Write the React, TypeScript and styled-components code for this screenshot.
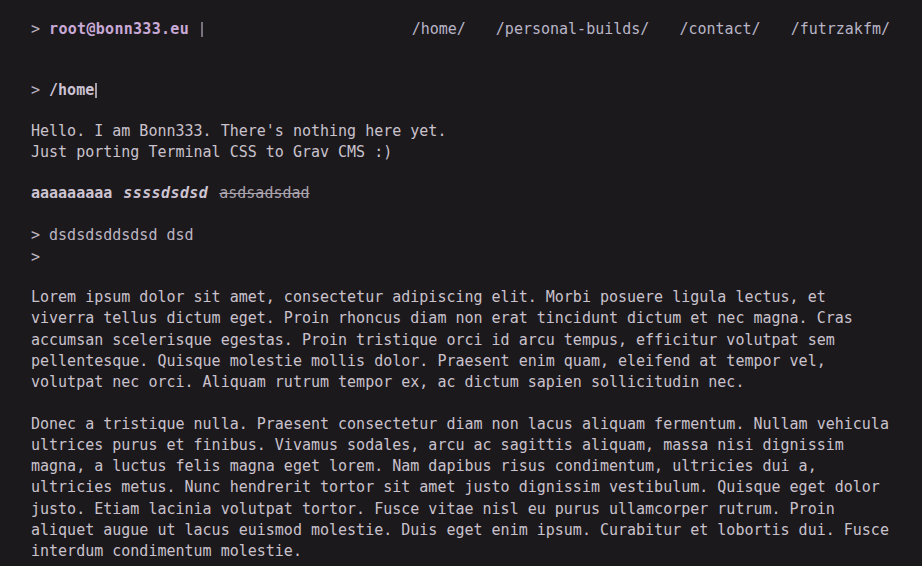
import React from "react";
import styled, { createGlobalStyle } from "styled-components";

const Global = createGlobalStyle`
  html, body { margin: 0; padding: 0; background: #1c191d; }
  body {
    font-family: "DejaVu Sans Mono", "Liberation Mono", monospace;
    font-size: 15px;
    line-height: 21.3px;
    color: #c9c2cc;
  }
`;

const Page = styled.div`
  padding: 19px 31px 0;
  min-height: 566px;
  box-sizing: border-box;
`;

const Header = styled.header`
  display: flex;
  justify-content: space-between;
  align-items: center;
  height: 21.3px;
`;

const Logo = styled.div`
  display: flex;
  align-items: center;
  font-weight: bold;
  color: #c9a9d6;
  letter-spacing: 0.3px;
`;

const Prompt = styled.span`
  color: #b9b2c0;
  font-weight: normal;
  white-space: pre;
  letter-spacing: 0;
`;

const Cursor = styled.span<{ $tone: string; $gap?: number }>`
  display: inline-block;
  width: 2px;
  height: 15px;
  background: ${(p) => p.$tone};
  margin-left: ${(p) => p.$gap ?? 0}px;
  vertical-align: -2px;
`;

const Nav = styled.nav`
  display: flex;
  gap: 30px;
  margin-right: 1px;
`;

const NavLink = styled.a`
  color: #b8b5c6;
  text-decoration: none;
`;

const Main = styled.main`
  margin-top: 40px;
`;

const Title = styled.h1`
  margin: 0 0 19px;
  font-size: 15px;
  line-height: 21.3px;
  font-weight: bold;
  color: #cbc2d2;
  display: flex;
  align-items: center;
`;

const Para = styled.p`
  margin: 0 0 20px;
`;

const Strong = styled.strong`
  font-weight: bold;
  color: #cdc4d2;
`;

const Em = styled.em`
  font-style: italic;
  font-weight: bold;
  color: #cdc4d2;
  letter-spacing: 0.4px;
  margin-left: 2px;
`;

const Del = styled.del`
  color: #aaa3ae;
  margin-left: 2px;
`;

const Quote = styled.blockquote`
  margin: 21px 0 19px;
  display: flex;
  color: #bdb6c2;
`;

const Gutter = styled.span`
  white-space: pre;
  width: 2ch;
  flex: none;
`;

export default function App() {
  return (
    <>
      <Global />
      <Page>
        <Header>
          <Logo>
            <Prompt>{"> "}</Prompt>
            root@bonn333.eu
            <Cursor $tone="#7a717e" $gap={12} />
          </Logo>
          <Nav>
            <NavLink href="#">/home/</NavLink>
            <NavLink href="#">/personal-builds/</NavLink>
            <NavLink href="#">/contact/</NavLink>
            <NavLink href="#">/futrzakfm/</NavLink>
          </Nav>
        </Header>
        <Main>
          <Title>
            <Prompt>{"> "}</Prompt>
            /home
            <Cursor $tone="#a59fab" $gap={1} />
          </Title>
          <Para>
            Hello. I am Bonn333. There's nothing here yet.
            <br />
            Just porting Terminal CSS to Grav CMS :)
          </Para>
          <Para>
            <Strong>aaaaaaaaa</Strong> <Em>ssssdsdsd</Em> <Del>asdsadsdad</Del>
          </Para>
          <Quote>
            <Gutter>{">\n>"}</Gutter>
            <span>dsdsdsddsdsd dsd</span>
          </Quote>
          <Para>
            Lorem ipsum dolor sit amet, consectetur adipiscing elit. Morbi posuere ligula lectus, et
            viverra tellus dictum eget. Proin rhoncus diam non erat tincidunt dictum et nec magna. Cras
            accumsan scelerisque egestas. Proin tristique orci id arcu tempus, efficitur volutpat sem
            pellentesque. Quisque molestie mollis dolor. Praesent enim quam, eleifend at tempor vel,
            volutpat nec orci. Aliquam rutrum tempor ex, ac dictum sapien sollicitudin nec.
          </Para>
          <Para>
            Donec a tristique nulla. Praesent consectetur diam non lacus aliquam fermentum. Nullam vehicula
            ultrices purus et finibus. Vivamus sodales, arcu ac sagittis aliquam, massa nisi dignissim
            magna, a luctus felis magna eget lorem. Nam dapibus risus condimentum, ultricies dui a,
            ultricies metus. Nunc hendrerit tortor sit amet justo dignissim vestibulum. Quisque eget dolor
            justo. Etiam lacinia volutpat tortor. Fusce vitae nisl eu purus ullamcorper rutrum. Proin
            aliquet augue ut lacus euismod molestie. Duis eget enim ipsum. Curabitur et lobortis dui. Fusce
            interdum condimentum molestie.
          </Para>
        </Main>
      </Page>
    </>
  );
}
